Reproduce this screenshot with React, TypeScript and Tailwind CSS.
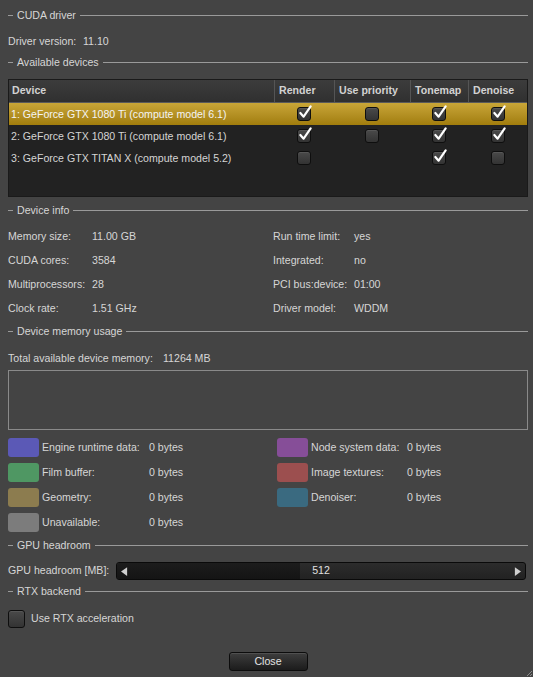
import React from 'react';

const lineColor = 'bg-[#9a9a9a]';

const Heading: React.FC<{ title: string; h: string }> = ({ title, h }) => (
  <div className={`flex items-center ${h}`}>
    <div className={`w-[5px] h-px ${lineColor}`} />
    <span className="px-[4px] leading-none">{title}</span>
    <div className={`flex-1 h-px ${lineColor}`} />
  </div>
);

const Check: React.FC<{ checked?: boolean; size?: string }> = ({ checked, size = 'w-[14px] h-[14px]' }) => (
  <div
    className={`relative ${size} rounded-[3px] border border-[#0e0e0e] bg-gradient-to-b from-[#4a4a4a] to-[#333333] shadow-[inset_0_1px_0_rgba(255,255,255,0.08)]`}
  >
    {checked && (
      <svg viewBox="0 0 16 16" className="absolute -top-[3px] left-[0px] w-[15px] h-[15px]">
        <path d="M2.5 8.5 L6 12.5 L13.5 1.5" fill="none" stroke="#ffffff" strokeWidth="2.3" strokeLinejoin="round" strokeLinecap="round" />
      </svg>
    )}
  </div>
);

const devices = [
  { name: '1: GeForce GTX 1080 Ti (compute model 6.1)', render: true, prio: false, tone: true, den: true, selected: true },
  { name: '2: GeForce GTX 1080 Ti (compute model 6.1)', render: true, prio: false, tone: true, den: true },
  { name: '3: GeForce GTX TITAN X (compute model 5.2)', render: false, prio: null, tone: true, den: false },
];

const legendLeft = [
  { label: 'Engine runtime data:', color: 'bg-[#5b59b6]' },
  { label: 'Film buffer:', color: 'bg-[#4f9763]' },
  { label: 'Geometry:', color: 'bg-[#8c7c4f]' },
  { label: 'Unavailable:', color: 'bg-[#7c7c7c]' },
];

const legendRight = [
  { label: 'Node system data:', color: 'bg-[#864e98]' },
  { label: 'Image textures:', color: 'bg-[#9c4f4f]' },
  { label: 'Denoiser:', color: 'bg-[#3a6a80]' },
];

const Swatch: React.FC<{ color: string }> = ({ color }) => (
  <div className={`w-[31px] h-[19px] rounded-[3px] ${color}`} />
);

export default function App() {
  return (
    <div className="w-[533px] h-[677px] bg-[#444444] text-[#d6d6d6] text-[10.6px] font-['Liberation_Sans',Arial,sans-serif] pl-[8px] pr-[5px] pt-[3px] overflow-hidden relative">
      <Heading title="CUDA driver" h="h-[24px]" />
      <div className="flex items-center h-[26px] pt-[4px]">
        <span className="w-[75px]">Driver version:</span>
        <span>11.10</span>
      </div>
      <Heading title="Available devices" h="h-[18px]" />

      {/* device table */}
      <div className="mt-[8px] h-[118px] border border-[#1a1a1a] bg-[#222222] flex flex-col">
        <div className="grid grid-cols-[265px_60px_76px_58px_1fr] h-[23px] bg-gradient-to-b from-[#3c3c3c] to-[#303030] border-b border-[#5a5a5a] font-bold text-[#d2d2d2]">
          <div className="flex items-center pl-[3px]">Device</div>
          <div className="flex items-center pl-[4px] border-l border-[#555555]">Render</div>
          <div className="flex items-center pl-[4px] border-l border-[#555555]">Use priority</div>
          <div className="flex items-center pl-[4px] border-l border-[#555555]">Tonemap</div>
          <div className="flex items-center pl-[4px] border-l border-[#555555]">Denoise</div>
        </div>
        {devices.map((d) => (
          <div
            key={d.name}
            className={`grid grid-cols-[265px_60px_76px_58px_1fr] h-[22px] ${
              d.selected ? 'bg-gradient-to-b from-[#c9a637] to-[#a17d0c] text-[#f4f4f4]' : 'text-[#d4d4d4]'
            }`}
          >
            <div className="flex items-center pl-[2px] pt-[2px]">{d.name}</div>
            <div className="flex items-center justify-center"><Check checked={d.render} /></div>
            <div className="flex items-center justify-center">{d.prio !== null && <Check checked={d.prio} />}</div>
            <div className="flex items-center justify-center"><Check checked={d.tone} /></div>
            <div className="flex items-center justify-center"><Check checked={d.den} /></div>
          </div>
        ))}
      </div>

      <Heading title="Device info" h="h-[26px]" />
      <div className="grid grid-cols-[265px_1fr]">
        <div>
          {[
            ['Memory size:', '11.00 GB'],
            ['CUDA cores:', '3584'],
            ['Multiprocessors:', '28'],
            ['Clock rate:', '1.51 GHz'],
          ].map(([l, v]) => (
            <div key={l} className="flex items-center h-[24px] pt-[4px]">
              <span className="w-[84px]">{l}</span>
              <span>{v}</span>
            </div>
          ))}
        </div>
        <div>
          {[
            ['Run time limit:', 'yes'],
            ['Integrated:', 'no'],
            ['PCI bus:device:', '01:00'],
            ['Driver model:', 'WDDM'],
          ].map(([l, v]) => (
            <div key={l} className="flex items-center h-[24px] pt-[4px]">
              <span className="w-[81px]">{l}</span>
              <span>{v}</span>
            </div>
          ))}
        </div>
      </div>

      <Heading title="Device memory usage" h="h-[24px]" />
      <div className="flex items-center h-[27px] pt-[4px]">
        <span className="w-[155px]">Total available device memory:</span>
        <span>11264 MB</span>
      </div>
      <div className="h-[60px] border border-[#8a8a8a]" />

      <div className="grid grid-cols-[269px_1fr] pt-[5px]">
        <div>
          {legendLeft.map((r) => (
            <div key={r.label} className="flex items-center h-[25px]">
              <Swatch color={r.color} />
              <span className="ml-[3px] w-[107px]">{r.label}</span>
              <span>0 bytes</span>
            </div>
          ))}
        </div>
        <div>
          {legendRight.map((r) => (
            <div key={r.label} className="flex items-center h-[25px]">
              <Swatch color={r.color} />
              <span className="ml-[3px] w-[96px]">{r.label}</span>
              <span>0 bytes</span>
            </div>
          ))}
        </div>
      </div>

      <Heading title="GPU headroom" h="h-[20px]" />
      <div className="flex items-center h-[28px] pt-[4px]">
        <span className="w-[108px]">GPU headroom [MB]:</span>
        <div className="relative flex-1 mr-[2px] h-[18px] rounded-[3px] border border-[#0a0a0a] bg-gradient-to-b from-[#2c2c2c] to-[#222222] overflow-hidden">
          <div className="absolute left-0 top-0 bottom-0 w-[183px] bg-gradient-to-b from-[#1c1c1c] to-[#141414]" />
          <svg viewBox="0 0 8 10" className="absolute left-[4px] top-[4px] w-[7px] h-[9px]">
            <path d="M7 0 L0 5 L7 10 Z" fill="#d0d0d0" />
          </svg>
          <svg viewBox="0 0 8 10" className="absolute right-[4px] top-[4px] w-[7px] h-[9px]">
            <path d="M1 0 L8 5 L1 10 Z" fill="#d0d0d0" />
          </svg>
          <div className="relative h-full flex items-center justify-center text-[#e0e0e0]">512</div>
        </div>
      </div>

      <Heading title="RTX backend" h="h-[16px]" />
      <div className="flex items-center h-[36px] pt-[4px]">
        <Check size="w-[17px] h-[18px]" />
        <span className="ml-[6px]">Use RTX acceleration</span>
      </div>

      <div className="flex justify-center mt-[17px]">
        <button className="w-[79px] h-[19px] pt-[1px] rounded-[3px] border border-[#0c0c0c] bg-gradient-to-b from-[#3e3e3e] to-[#1c1c1c] text-[#e4e4e4] shadow-[inset_0_1px_0_rgba(255,255,255,0.1)]">
          Close
        </button>
      </div>

      <svg viewBox="0 0 8 8" className="absolute right-[0px] bottom-[0px] w-[8px] h-[8px]">
        <path d="M7 2 L2 7 M7 5 L5 7" stroke="#8a8a8a" strokeWidth="1" />
      </svg>
    </div>
  );
}
